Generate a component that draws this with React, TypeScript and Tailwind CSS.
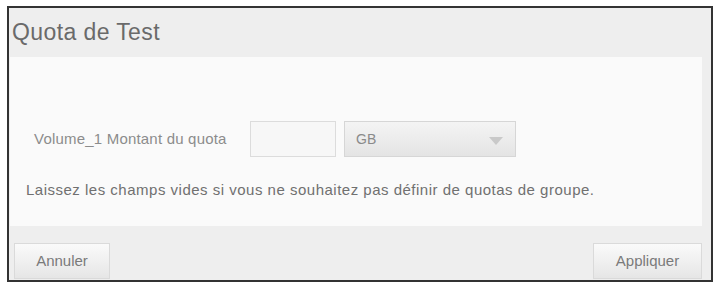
export default function App() {
  return (
    <div className="w-[714px] h-[284px] bg-white pt-[6px] pl-[7px] pr-[1px] pb-[2px]">
      <div
        className="flex h-full flex-col border-2 border-[#333333] bg-[#eeeeee]"
        style={{ fontFamily: '"Liberation Sans", Arial, sans-serif' }}
      >
        {/* ── Header ─────────────────────────────── */}
        <div className="flex h-[49px] items-center pl-[3px] text-[23px] tracking-[0.4px] text-[#6a6a6a]">
          Quota de Test
        </div>

        {/* ── Body ───────────────────────────────── */}
        <div className="ml-[1px] mr-[9px] flex h-[169px] flex-col bg-[#fafafa] pl-[24px] pt-[64px]">
          <div className="flex items-center">
            <span className="w-[216px] text-[15px] tracking-[0.2px] text-[#8c8c8c]">Volume_1 Montant du quota</span>
            <div className="h-[36px] w-[86px] border border-[#dcdcdc] bg-[#f7f7f7]" />
            <div className="ml-[8px] flex h-[36px] w-[172px] items-center justify-between border border-[#d6d6d6] bg-gradient-to-b from-[#f4f4f4] to-[#e4e4e4] px-[11px]">
              <span className="text-[14px] text-[#8a8a8a]">GB</span>
              <svg width="14" height="8" viewBox="0 0 14 8" className="mt-[4px] mr-[1px]">
                <path d="M0 0 L14 0 L7 8 Z" fill="#c9c9c9" />
              </svg>
            </div>
          </div>
          <p className="mt-[22px] -ml-[8px] text-[15px] tracking-[0.5px] text-[#707070]">
            Laissez les champs vides si vous ne souhaitez pas définir de quotas de groupe.
          </p>
        </div>

        {/* ── Footer ─────────────────────────────── */}
        <div className="flex flex-1 items-end justify-between pl-[5px] pr-[9px] pb-[1px]">
          <button className="h-[36px] w-[96px] border border-[#dadada] bg-gradient-to-b from-[#fafafa] to-[#e6e6e6] text-[15px] text-[#7a7a7a]">
            Annuler
          </button>
          <button className="h-[36px] w-[109px] border border-[#dadada] bg-gradient-to-b from-[#fafafa] to-[#e6e6e6] text-[15px] text-[#7a7a7a]">
            Appliquer
          </button>
        </div>
      </div>
    </div>
  )
}
